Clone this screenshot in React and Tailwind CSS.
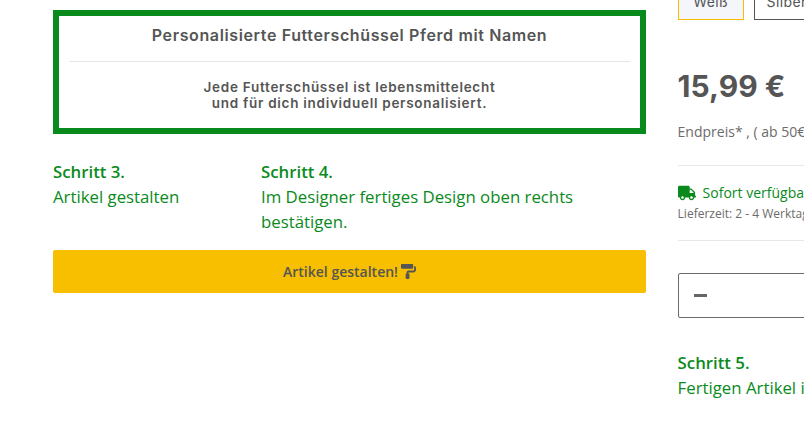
import React from 'react';
import { FaTruck, FaPaintRoller } from 'react-icons/fa';

function Step({ title, children, className }) {
  return (
    <div className={className}>
      <div className="font-semibold">{title}</div>
      <div>{children}</div>
    </div>
  );
}

export default function App() {
  return (
    <div className="w-[804px] h-[429px] overflow-hidden bg-white flex pl-[53px] text-[#555555] font-['Open_Sans',sans-serif]">
      {/* left column */}
      <div className="w-[593px] shrink-0 pt-[10px]">
        <div className="h-[124px] border-[6px] border-[#088a1c] px-[10px] text-center font-['Inter',sans-serif]">
          <div className="h-[46px] border-b border-[#e5e5e5] pt-[8px] text-[16px] leading-[22px] font-semibold tracking-[0.62px]">
            Personalisierte Futterschüssel Pferd mit Namen
          </div>
          <div className="pt-[17px] text-[13.5px] leading-[16px] font-semibold tracking-[0.72px]">
            Jede Futterschüssel ist lebensmittelecht<br />
            und für dich individuell personalisiert.
          </div>
        </div>

        <div className="flex mt-[25px] text-[#0a8a1c] text-[16.8px] leading-[25px]">
          <Step title="Schritt 3." className="w-[208px]">Artikel gestalten</Step>
          <Step title="Schritt 4." className="w-[330px]">Im Designer fertiges Design oben rechts bestätigen.</Step>
        </div>

        <button className="mt-[16px] w-full h-[43px] rounded-[2px] bg-[#f8bf00] flex items-center justify-center gap-[3px] text-[14px] font-semibold text-[#555555]">
          Artikel gestalten!
          <FaPaintRoller className="text-[15px]" />
        </button>
      </div>

      {/* right column */}
      <div className="ml-[31.6px] w-[300px] shrink-0">
        <div className="flex gap-[10px] -mt-[11px] h-[31px] text-[14px] tracking-[0.4px] font-['Inter',sans-serif]">
          <div className="w-[66px] border border-[#f8bf00] bg-[#f4f6fb] text-center leading-[24px]">Weiß</div>
          <div className="w-[66px] border border-[#555555] text-center leading-[24px]">Silber</div>
        </div>

        <div className="mt-[46px] font-['Inter',sans-serif] text-[30px] leading-[40px] font-bold">15,99 €</div>
        <div className="mt-[15px] text-[14px] leading-[21px] text-[#6b6b6b] whitespace-nowrap">Endpreis* , ( ab 50€ versandkostenfrei )</div>

        <div className="w-[127px] mt-[23px] border-t border-[#e8e8e8]"></div>
        <div className="mt-[17px] flex items-center gap-[7px] text-[14px] leading-[20px] text-[#0a8a1c] whitespace-nowrap">
          <FaTruck className="text-[18px]" />
          Sofort verfügbar
        </div>
        <div className="mt-[2px] text-[12px] leading-[18px] text-[#6b6b6b] whitespace-nowrap">Lieferzeit: 2 - 4 Werktage</div>
        <div className="w-[127px] mt-[17px] border-t border-[#e8e8e8]"></div>

        <div className="mt-[32px] h-[45px] w-[200px] rounded-[2px] border border-[#6b6b6b] flex items-center pl-[15px]">
          <span className="block w-[13px] h-[3px] bg-[#666666]"></span>
        </div>

        <div className="mt-[32px] text-[#0a8a1c] text-[16.8px] leading-[25px] whitespace-nowrap">
          <div className="font-semibold">Schritt 5.</div>
          <div>Fertigen Artikel in den Warenkorb legen</div>
        </div>
      </div>
    </div>
  );
}
